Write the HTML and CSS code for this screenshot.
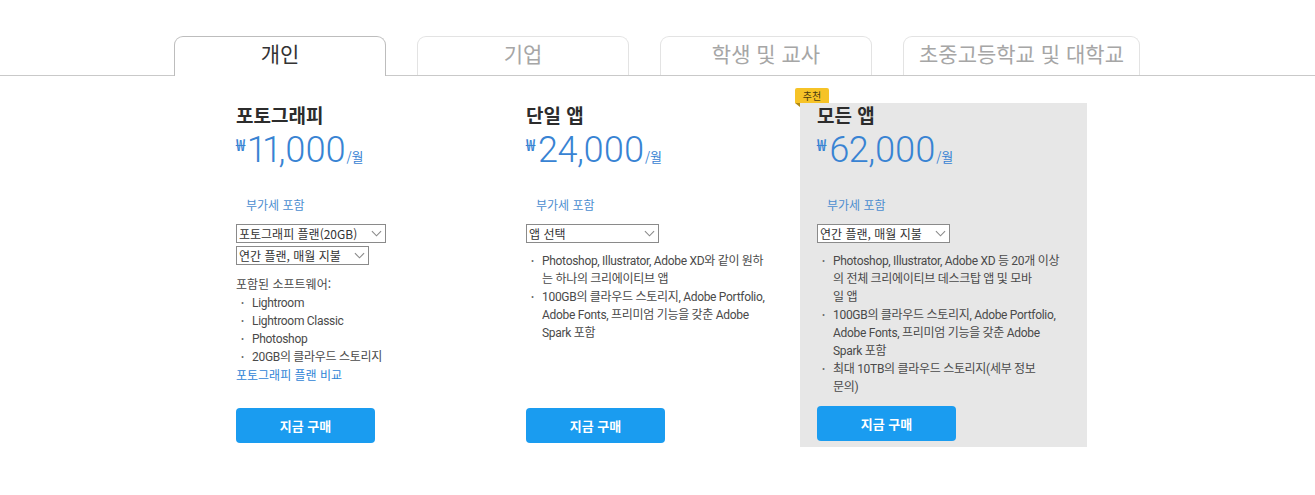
FILE: index.html
```html
<!DOCTYPE html>
<html lang="ko">
<head>
<meta charset="utf-8">
<title>플랜</title>
<link rel="stylesheet" href="styles.css">
</head>
<body>
<nav class="tabs">
  <div class="tab active">개인</div>
  <div class="tab">기업</div>
  <div class="tab">학생 및 교사</div>
  <div class="tab">초중고등학교 및 대학교</div>
</nav>

<main class="plans">
  <section class="plan">
    <h2 class="plan-title">포토그래피</h2>
    <div class="price"><span class="cur">₩</span><span class="amount">11,000</span><span class="per">/월</span></div>
    <div class="vat">부가세 포함</div>
    <div class="select wide">포토그래피 플랜(20GB)<svg class="chev" viewBox="0 0 12 7"><path d="M1 1l5 5 5-5"/></svg></div>
    <div class="select second">연간 플랜, 매월 지불<svg class="chev" viewBox="0 0 12 7"><path d="M1 1l5 5 5-5"/></svg></div>
    <div class="plan-body">
      <p class="included">포함된 소프트웨어:</p>
      <ul class="features tight">
        <li>Lightroom</li>
        <li>Lightroom Classic</li>
        <li>Photoshop</li>
        <li>20GB의 클라우드 스토리지</li>
      </ul>
      <a class="compare" href="#">포토그래피 플랜 비교</a>
    </div>
    <a class="buy" href="#">지금 구매</a>
  </section>

  <section class="plan">
    <h2 class="plan-title">단일 앱</h2>
    <div class="price"><span class="cur">₩</span><span class="amount">24,000</span><span class="per">/월</span></div>
    <div class="vat">부가세 포함</div>
    <div class="select">앱 선택<svg class="chev" viewBox="0 0 12 7"><path d="M1 1l5 5 5-5"/></svg></div>
    <div class="plan-body">
      <ul class="features">
        <li>Photoshop, Illustrator, Adobe XD와 같이 원하<br>는 하나의 크리에이티브 앱</li>
        <li>100GB의 클라우드 스토리지, Adobe Portfolio,<br>Adobe Fonts, 프리미엄 기능을 갖춘 Adobe<br>Spark 포함</li>
      </ul>
    </div>
    <a class="buy" href="#">지금 구매</a>
  </section>

  <section class="plan featured">
    <span class="badge">추천</span>
    <h2 class="plan-title">모든 앱</h2>
    <div class="price"><span class="cur">₩</span><span class="amount">62,000</span><span class="per">/월</span></div>
    <div class="vat">부가세 포함</div>
    <div class="select">연간 플랜, 매월 지불<svg class="chev" viewBox="0 0 12 7"><path d="M1 1l5 5 5-5"/></svg></div>
    <div class="plan-body">
      <ul class="features">
        <li>Photoshop, Illustrator, Adobe XD 등 20개 이상<br>의 전체 크리에이티브 데스크탑 앱 및 모바<br>일 앱</li>
        <li>100GB의 클라우드 스토리지, Adobe Portfolio,<br>Adobe Fonts, 프리미엄 기능을 갖춘 Adobe<br>Spark 포함</li>
        <li>최대 10TB의 클라우드 스토리지(세부 정보<br>문의)</li>
      </ul>
    </div>
    <a class="buy" href="#">지금 구매</a>
  </section>
</main>
</body>
</html>
```

FILE: styles.css
```css
*, *::before, *::after { box-sizing: border-box; }

html, body {
  margin: 0;
  padding: 0;
  background: #fff;
}

body {
  font-family: "Noto Sans CJK KR", "Noto Sans", sans-serif;
  color: #333;
  width: 1315px;
  height: 495px;
  overflow: hidden;
}

/* Tabs */
.tabs {
  display: flex;
  gap: 31px;
  padding: 36px 0 0 174px;
  border-bottom: 1px solid #c9c9c9;
  height: 76px;
}

.tab {
  min-width: 212px;
  padding: 0 15px;
  height: 39px;
  border: 1px solid #e3e3e3;
  border-bottom: none;
  border-radius: 9px 9px 0 0;
  font-size: 21px;
  line-height: 33px;
  text-align: center;
  color: #a6a6a6;
  background: #fff;
}

.tab.active {
  height: 40px;
  margin-bottom: -1px;
  border-color: #bdbdbd;
  color: #333;
}

/* Plans */
.plans {
  display: grid;
  grid-template-columns: 290px 291px 287px;
  margin: 27px 0 0 219px;
}

.plan {
  position: relative;
  display: flex;
  flex-direction: column;
  align-items: flex-start;
  padding: 0 8px 4px 17px;
}

.plan.featured {
  background: #e7e7e7;
  padding-bottom: 6px;
}

.badge {
  position: absolute;
  top: -15px;
  left: -5px;
  width: 34px;
  height: 15px;
  background: #f6c327;
  color: #4a3a10;
  font-size: 10px;
  line-height: 15px;
  text-align: center;
  border-radius: 2px 2px 0 0;
}

.badge::after {
  content: "";
  position: absolute;
  left: 0;
  top: 15px;
  border-top: 4px solid #b28a12;
  border-left: 5px solid transparent;
}

.plan-title {
  margin: 0;
  font-size: 19px;
  line-height: 24px;
  font-weight: 700;
  color: #2c2c2c;
}

.price {
  margin-top: 3px;
  height: 40px;
  line-height: 40px;
  color: #3883d3;
  white-space: nowrap;
  display: flex;
  align-items: baseline;
}

.cur {
  font-family: "Noto Sans CJK KR", sans-serif;
  font-size: 16px;
  font-weight: 500;
  align-self: flex-start;
  line-height: 1;
  margin-top: 6px;
  width: 12px;
  letter-spacing: -1px;
}

.amount {
  font-family: Roboto, "Liberation Sans", sans-serif;
  font-weight: 300;
  font-size: 36px;
  letter-spacing: -0.5px;
  font-variant-numeric: proportional-nums;
}

.per {
  font-size: 13px;
  margin-left: 1px;
}

.vat {
  margin-top: 26px;
  padding-left: 10px;
  font-size: 12px;
  line-height: 18px;
  color: #4c8ed0;
}

.select {
  margin-top: 10px;
  width: 133px;
  height: 19px;
  border: 1px solid #8a8a8a;
  background: #fff;
  font-size: 12px;
  line-height: 17px;
  padding-left: 2px;
  color: #333;
  display: flex;
  align-items: center;
  justify-content: space-between;
  white-space: nowrap;
}

.select.wide { width: 150px; }
.select.second { margin-top: 3px; }

.chev {
  width: 11px;
  height: 7px;
  margin-right: 3px;
  flex: none;
  fill: none;
  stroke: #8a8a8a;
  stroke-width: 1.2;
}

.plan-body {
  flex: 1;
  width: 100%;
}

.included {
  margin: 10px 0 0;
  font-size: 12px;
  line-height: 18px;
  color: #4a4a4a;
}

.features {
  list-style: none;
  margin: 9px 0 0;
  padding: 0;
  font-family: Roboto, "Noto Sans CJK KR", sans-serif;
  font-size: 12px;
  line-height: 18px;
  letter-spacing: -0.3px;
  color: #4a4a4a;
  white-space: nowrap;
}

.features.tight { margin-top: 1px; }

.features li {
  display: flex;
}

.features li::before {
  content: "•";
  flex: 0 0 16px;
  padding-left: 5px;
  font-size: 9px;
  color: #666;
}

.compare {
  display: block;
  font-size: 12px;
  line-height: 18px;
  color: #2f84d6;
  text-decoration: none;
}

.buy {
  margin-top: 10px;
  width: 139px;
  height: 35px;
  border-radius: 4px;
  background: #1a9cf0;
  color: #fff;
  font-size: 13px;
  font-weight: 700;
  line-height: 35px;
  text-align: center;
  text-decoration: none;
}
```
